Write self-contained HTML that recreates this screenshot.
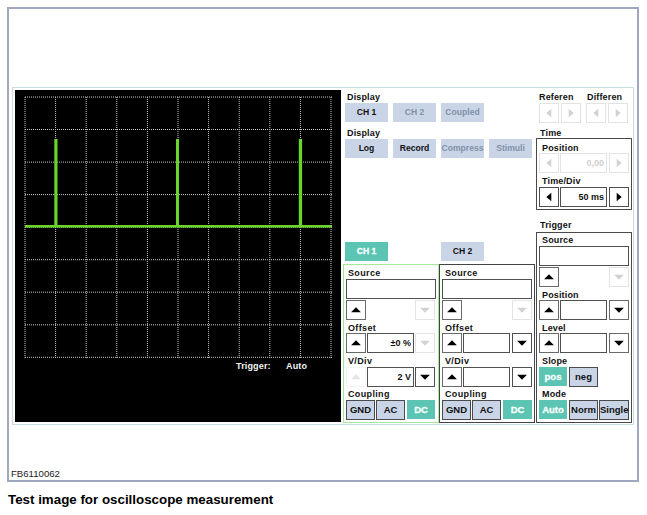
<!DOCTYPE html>
<html><head><meta charset="utf-8"><title>Test image for oscilloscope measurement</title>
<style>
html,body{margin:0;padding:0;background:#fff;}
body{width:647px;height:515px;position:relative;overflow:hidden;font-family:"Liberation Sans",Arial,sans-serif;}
.a{position:absolute;box-sizing:border-box;}
.frame{left:7px;top:7px;width:632px;height:475px;border:2px solid #a0a7be;}
.panel{left:12px;top:87px;width:622px;height:338px;border:1px solid #c9dede;}
.scope{left:15px;top:90px;width:326px;height:332px;background:#000;}
.l{position:absolute;font-weight:bold;font-size:9px;line-height:10px;color:#111;white-space:nowrap;letter-spacing:0.15px;}
.b{position:absolute;box-sizing:border-box;font-weight:bold;font-size:8.6px;line-height:19px;height:19px;text-align:center;color:#111;white-space:nowrap;background:#c9d5e6;}
.b.lo{font-size:9.5px;line-height:20px;}
.b.dis{color:#8191a9;}
.b.on{background:#5cc4b2;color:#f6fffd;-webkit-text-stroke:0.3px #f6fffd;}
.b.bd{border:1px solid #4a4a4a;line-height:18px;height:20px;font-size:9.5px;}
.g{position:absolute;box-sizing:border-box;border:1px solid #4a4a4a;}
.x{position:absolute;box-sizing:border-box;height:20px;background:#fff;border:1px solid #6a6a6a;}
.x.v{border-color:#505050;}
.x.d{border-color:#e3e3e3;}
.x.n{border-color:#f4f4f4;}
.v span{position:absolute;right:2px;top:0;font-weight:bold;font-size:9px;line-height:19px;color:#111;white-space:nowrap;}
.v.d span{color:#d0d0d0;}
svg{position:absolute;left:0;top:0;}
.cap{left:8px;top:492px;font-weight:bold;font-size:13.35px;line-height:16px;color:#000;white-space:nowrap;}
.fb{left:11px;top:468px;font-size:9.6px;line-height:11px;color:#222;white-space:nowrap;}
</style></head><body>
<div class="a frame"></div>
<div class="a panel"></div>
<div class="a scope"></div>

<svg width="647" height="515" viewBox="0 0 647 515" >
<g stroke="#c8c8c8" stroke-width="1" stroke-dasharray="1 1" fill="none">
<line x1="25.0" y1="97" x2="25.0" y2="358"/>
<line x1="55.6" y1="97" x2="55.6" y2="358"/>
<line x1="86.2" y1="97" x2="86.2" y2="358"/>
<line x1="116.8" y1="97" x2="116.8" y2="358"/>
<line x1="147.4" y1="97" x2="147.4" y2="358"/>
<line x1="178.0" y1="97" x2="178.0" y2="358"/>
<line x1="208.6" y1="97" x2="208.6" y2="358"/>
<line x1="239.2" y1="97" x2="239.2" y2="358"/>
<line x1="269.8" y1="97" x2="269.8" y2="358"/>
<line x1="300.4" y1="97" x2="300.4" y2="358"/>
<line x1="331.0" y1="97" x2="331.0" y2="358"/>
<line x1="25" y1="97.0" x2="332" y2="97.0"/>
<line x1="25" y1="129.5" x2="332" y2="129.5"/>
<line x1="25" y1="162.1" x2="332" y2="162.1"/>
<line x1="25" y1="194.6" x2="332" y2="194.6"/>
<line x1="25" y1="227.2" x2="332" y2="227.2"/>
<line x1="25" y1="259.7" x2="332" y2="259.7"/>
<line x1="25" y1="292.2" x2="332" y2="292.2"/>
<line x1="25" y1="324.8" x2="332" y2="324.8"/>
<line x1="25" y1="357.3" x2="332" y2="357.3"/>
</g>
<g fill="#68d42c">
<rect x="25" y="225" width="307" height="2"/>
<rect x="54.3" y="139" width="3.2" height="87"/>
<rect x="176" y="139" width="3" height="87"/>
<rect x="298.8" y="139" width="3.3" height="87"/>
</g>
<g fill="#68d42c" opacity="0.6">
<rect x="25" y="227" width="307" height="1"/>
</g>
</svg>
<div class="l" style="left:236px;top:361px;color:#f4f4f4;font-size:9px;">Trigger:</div>
<div class="l" style="left:286px;top:361px;color:#f4f4f4;font-size:9px;">Auto</div>
<div class="l" style="left:347px;top:92px;">Display</div>
<div class="b " style="left:345px;top:103px;width:43px;">CH 1</div>
<div class="b dis" style="left:393px;top:103px;width:43px;">CH 2</div>
<div class="b dis" style="left:441px;top:103px;width:43px;">Coupled</div>
<div class="l" style="left:347px;top:128px;">Display</div>
<div class="b " style="left:345px;top:139px;width:43px;">Log</div>
<div class="b " style="left:393px;top:139px;width:43px;">Record</div>
<div class="b dis" style="left:441px;top:139px;width:43px;">Compress</div>
<div class="b dis" style="left:489px;top:139px;width:43px;">Stimuli</div>
<div class="l" style="left:539px;top:92px;">Referen</div>
<div class="l" style="left:587px;top:92px;">Differen</div>
<div class="x d" style="left:539px;top:103px;width:20px;"></div>
<div class="x d" style="left:561px;top:103px;width:20px;"></div>
<div class="x d" style="left:586px;top:103px;width:20px;"></div>
<div class="x d" style="left:608px;top:103px;width:20px;"></div>
<div class="l" style="left:540px;top:128px;">Time</div>
<div class="g" style="left:536px;top:138px;width:96px;height:72px;"></div>
<div class="l" style="left:542px;top:143px;">Position</div>
<div class="x d" style="left:539px;top:153px;width:20px;"></div>
<div class="x v d" style="left:560px;top:153px;width:47px;"><span>0,00</span></div>
<div class="x d" style="left:609px;top:153px;width:20px;"></div>
<div class="l" style="left:542px;top:176px;">Time/Div</div>
<div class="x v" style="left:539px;top:187px;width:20px;"></div>
<div class="x v v" style="left:560px;top:187px;width:47px;"><span>50 ms</span></div>
<div class="x v" style="left:609px;top:187px;width:20px;"></div>
<div class="l" style="left:540px;top:220px;">Trigger</div>
<div class="g" style="left:536px;top:232px;width:96px;height:191px;"></div>
<div class="l" style="left:542px;top:235px;">Source</div>
<div class="x v" style="left:539px;top:246px;width:90px;height:20px;"></div>
<div class="x " style="left:539px;top:267px;width:20px;"></div>
<div class="x d" style="left:609px;top:267px;width:20px;"></div>
<div class="l" style="left:542px;top:290px;">Position</div>
<div class="x " style="left:539px;top:300px;width:20px;"></div>
<div class="x v " style="left:560px;top:300px;width:47px;"><span></span></div>
<div class="x " style="left:609px;top:300px;width:20px;"></div>
<div class="l" style="left:542px;top:323px;">Level</div>
<div class="x " style="left:539px;top:333px;width:20px;"></div>
<div class="x v " style="left:560px;top:333px;width:47px;"><span></span></div>
<div class="x " style="left:609px;top:333px;width:20px;"></div>
<div class="l" style="left:542px;top:356px;">Slope</div>
<div class="b on lo" style="left:539px;top:367px;width:28px;">pos</div>
<div class="b bd" style="left:569px;top:367px;width:29px;">neg</div>
<div class="l" style="left:542px;top:389px;">Mode</div>
<div class="b on lo" style="left:539px;top:400px;width:28px;">Auto</div>
<div class="b bd" style="left:569px;top:400px;width:29px;">Norm</div>
<div class="b bd" style="left:599px;top:400px;width:30px;">Single</div>
<div class="b on" style="left:345px;top:242px;width:43px;">CH 1</div>
<div class="b " style="left:441px;top:242px;width:43px;">CH 2</div>
<div class="g" style="left:343px;top:264px;width:96px;height:159px;border-color:#a6e89a;"></div>
<div class="l" style="left:348px;top:268px;letter-spacing:0.35px;">Source</div>
<div class="x v" style="left:346px;top:279px;width:90px;height:20px;"></div>
<div class="x " style="left:346px;top:300px;width:20px;"></div>
<div class="x d" style="left:415px;top:300px;width:20px;"></div>
<div class="l" style="left:348px;top:323px;letter-spacing:0.35px;">Offset</div>
<div class="x " style="left:346px;top:333px;width:20px;"></div>
<div class="x v v" style="left:367px;top:333px;width:47px;"><span>±0 %</span></div>
<div class="x d" style="left:415px;top:333px;width:20px;"></div>
<div class="l" style="left:348px;top:356px;letter-spacing:0.35px;">V/Div</div>
<div class="x n" style="left:346px;top:367px;width:20px;"></div>
<div class="x v v" style="left:367px;top:367px;width:47px;"><span>2 V</span></div>
<div class="x v" style="left:415px;top:367px;width:20px;"></div>
<div class="l" style="left:348px;top:389px;letter-spacing:0.35px;">Coupling</div>
<div class="b bd" style="left:346px;top:400px;width:29px;">GND</div>
<div class="b bd" style="left:376px;top:400px;width:29px;">AC</div>
<div class="b on lo" style="left:407px;top:400px;width:28px;">DC</div>
<div class="g" style="left:439px;top:264px;width:96px;height:159px;border-color:#444;"></div>
<div class="l" style="left:445px;top:268px;letter-spacing:0.35px;">Source</div>
<div class="x v" style="left:442px;top:279px;width:90px;height:20px;"></div>
<div class="x " style="left:442px;top:300px;width:20px;"></div>
<div class="x d" style="left:512px;top:300px;width:20px;"></div>
<div class="l" style="left:445px;top:323px;letter-spacing:0.35px;">Offset</div>
<div class="x " style="left:442px;top:333px;width:20px;"></div>
<div class="x v " style="left:463px;top:333px;width:47px;"><span></span></div>
<div class="x v" style="left:512px;top:333px;width:20px;"></div>
<div class="l" style="left:445px;top:356px;letter-spacing:0.35px;">V/Div</div>
<div class="x " style="left:442px;top:367px;width:20px;"></div>
<div class="x v " style="left:463px;top:367px;width:47px;"><span></span></div>
<div class="x v" style="left:512px;top:367px;width:20px;"></div>
<div class="l" style="left:445px;top:389px;letter-spacing:0.35px;">Coupling</div>
<div class="b bd" style="left:442px;top:400px;width:29px;">GND</div>
<div class="b bd" style="left:472px;top:400px;width:29px;">AC</div>
<div class="b on lo" style="left:503px;top:400px;width:29px;">DC</div>
<svg width="647" height="515" viewBox="0 0 647 515"><polygon points="551.3,108.7 551.3,117.3 546.3,113.0" fill="#cfd3d6"/><polygon points="568.7,108.7 568.7,117.3 573.7,113.0" fill="#cfd3d6"/><polygon points="598.3,108.7 598.3,117.3 593.3,113.0" fill="#cfd3d6"/><polygon points="615.7,108.7 615.7,117.3 620.7,113.0" fill="#cfd3d6"/><polygon points="551.3,158.7 551.3,167.3 546.3,163.0" fill="#cfd3d6"/><polygon points="616.7,158.7 616.7,167.3 621.7,163.0" fill="#cfd3d6"/><polygon points="551.3,192.7 551.3,201.3 546.3,197.0" fill="#000"/><polygon points="616.7,192.7 616.7,201.3 621.7,197.0" fill="#000"/><polygon points="544.1,279.3 553.9,279.3 549.0,274.3" fill="#000"/><polygon points="614.1,274.7 623.9,274.7 619.0,279.7" fill="#cfd3d6"/><polygon points="544.1,312.3 553.9,312.3 549.0,307.3" fill="#000"/><polygon points="614.1,307.7 623.9,307.7 619.0,312.7" fill="#000"/><polygon points="544.1,345.3 553.9,345.3 549.0,340.3" fill="#000"/><polygon points="614.1,340.7 623.9,340.7 619.0,345.7" fill="#000"/><polygon points="351.1,312.3 360.9,312.3 356.0,307.3" fill="#000"/><polygon points="420.1,307.7 429.9,307.7 425.0,312.7" fill="#cfd3d6"/><polygon points="351.1,345.3 360.9,345.3 356.0,340.3" fill="#000"/><polygon points="420.1,340.7 429.9,340.7 425.0,345.7" fill="#cfd3d6"/><polygon points="351.1,379.3 360.9,379.3 356.0,374.3" fill="#e2e4e6"/><polygon points="420.1,374.7 429.9,374.7 425.0,379.7" fill="#000"/><polygon points="447.1,312.3 456.9,312.3 452.0,307.3" fill="#000"/><polygon points="517.1,307.7 526.9,307.7 522.0,312.7" fill="#cfd3d6"/><polygon points="447.1,345.3 456.9,345.3 452.0,340.3" fill="#000"/><polygon points="517.1,340.7 526.9,340.7 522.0,345.7" fill="#000"/><polygon points="447.1,379.3 456.9,379.3 452.0,374.3" fill="#000"/><polygon points="517.1,374.7 526.9,374.7 522.0,379.7" fill="#000"/></svg>
<div class="a fb">FB6110062</div>
<div class="a cap">Test image for oscilloscope measurement</div>
</body></html>
